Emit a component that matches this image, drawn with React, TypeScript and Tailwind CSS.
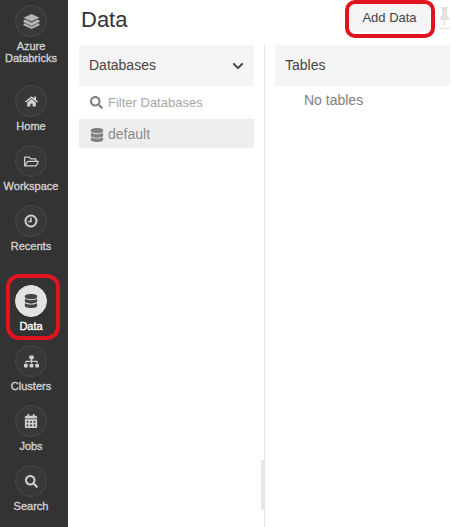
import React from "react";
import { FaHome, FaRegFolderOpen, FaDatabase, FaSitemap, FaCalendarAlt, FaSearch, FaChevronDown } from "react-icons/fa";

function Logo() {
  return (
    <svg width="17" height="15" viewBox="0 0 17 15" fill="#b4b4b4">
      <path d="M8.5 0 16.5 3.8 8.5 7.6 0.5 3.8Z" />
      <path d="M0.5 6.2 2.4 5.4 8.5 8.6 14.6 5.4 16.5 6.2V8L8.5 12 0.5 8Z" />
      <path d="M0.5 10 2 9.3 8.5 12.8 15 9.3 16.5 10V11.2L8.5 15 0.5 11.2Z" />
    </svg>
  );
}

function Clock() {
  return (
    <svg width="14" height="14" viewBox="0 0 14 14" fill="none" stroke="#d0d0d0">
      <circle cx="7" cy="7" r="5.5" strokeWidth="2" />
      <path d="M7 3.8V7.5H4.2" strokeWidth="1.5" />
    </svg>
  );
}

function Pin() {
  return (
    <svg width="11" height="22" viewBox="0 0 11 22" fill="#e2e2e2">
      <path d="M2 0H9V1.5L8 2.5V8.5L10.5 11.5V13H6.2V19H4.8V13H0.5V11.5L3 8.5V2.5L2 1.5Z" />
      <path d="M0 21H11V22H0Z" />
    </svg>
  );
}

function NavItem({ icon, label, active, className }: { icon: React.ReactNode; label: React.ReactNode; active?: boolean; className?: string }) {
  return (
    <div className={`flex flex-col items-center ${className ?? "h-[60px]"}`}>
      <div className={`flex h-8 w-8 items-center justify-center rounded-full border ${active ? "border-[#e3e3e3] bg-[#e3e3e3] text-[#444444]" : "border-[#4a4a4a] bg-[#383838] text-[#cfcfcf]"}`}>
        {icon}
      </div>
      <div className={`mt-[3px] whitespace-nowrap text-center text-[11px] leading-[12px] [-webkit-text-stroke:0.35px_currentColor] ${active ? "text-white" : "text-[#d0d0d0]"}`}>{label}</div>
    </div>
  );
}

export default function App() {
  return (
    <div className="relative flex h-[527px] w-[452px] overflow-hidden bg-white font-['Liberation_Sans',Arial,sans-serif]">
      <aside className="flex h-full w-[68px] shrink-0 flex-col bg-[#333333] pt-[5px]">
        <div className="flex w-[62px] flex-col">
          <NavItem className="h-20" icon={<Logo />} label={<>Azure<br />Databricks</>} />
          <NavItem icon={<FaHome size={13} />} label="Home" />
          <NavItem icon={<FaRegFolderOpen size={15} />} label="Workspace" />
          <NavItem className="h-20" icon={<Clock />} label="Recents" />
          <NavItem active icon={<FaDatabase size={14} />} label="Data" />
          <NavItem icon={<FaSitemap size={15} />} label="Clusters" />
          <NavItem icon={<FaCalendarAlt size={14} />} label="Jobs" />
          <NavItem icon={<FaSearch size={13} />} label="Search" />
        </div>
      </aside>

      <main className="flex min-w-0 flex-1 flex-col">
        <header className="flex h-[45px] shrink-0 items-start justify-between pl-[13px] pr-[2px]">
          <h1 className="mt-[7px] text-[22px] leading-[26px] text-[#333333]">Data</h1>
          <div className="flex items-start">
            <button className="mt-[4px] h-[28px] w-[81px] rounded-[3px] bg-[#f5f5f5] text-[13px] text-[#444444]">Add Data</button>
            <div className="ml-[9px] mt-[7px]">
              <Pin />
            </div>
          </div>
        </header>

        <div className="flex min-h-0 flex-1 pl-[11px]">
          <section className="w-[175px] shrink-0">
            <div className="flex h-[41px] items-center justify-between bg-[#f5f5f5] pl-[10px] pr-[10px] text-[14px] text-[#444444]">
              <span>Databases</span>
              <FaChevronDown size={12} className="text-[#444444]" />
            </div>
            <div className="flex h-[33px] items-center gap-[5px] pl-[11px] text-[13px] text-[#a6a6a6]">
              <FaSearch size={13} className="text-[#808080]" />
              <span>Filter Databases</span>
            </div>
            <div className="flex h-[29px] items-center gap-[4px] bg-[#eeeeee] pl-[11px] pt-[2px] text-[14px] text-[#8a8a8a]">
              <FaDatabase size={14} className="text-[#808080]" />
              <span>default</span>
            </div>
          </section>
          <div className="ml-[10px] w-px shrink-0 bg-[#e6e6e6]" />
          <section className="ml-[10px] w-[175px] shrink-0">
            <div className="flex h-[41px] items-center bg-[#f5f5f5] pl-[10px] text-[14px] text-[#444444]">Tables</div>
            <div className="pl-[29px] pt-[6px] text-[14px] leading-[16px] text-[#808080]">No tables</div>
          </section>
        </div>
      </main>

      <div className="absolute left-[261px] top-[460px] h-[50px] w-[3px] bg-[#e8e8e8]" />
      <div className="absolute left-[6px] top-[274px] h-[66px] w-[54px] rounded-[13px] border-[4px] border-[#e0141f]" />
      <div className="absolute left-[345px] top-0 h-[38px] w-[90px] rounded-[10px] border-[4px] border-[#e0141f]" />
    </div>
  );
}
